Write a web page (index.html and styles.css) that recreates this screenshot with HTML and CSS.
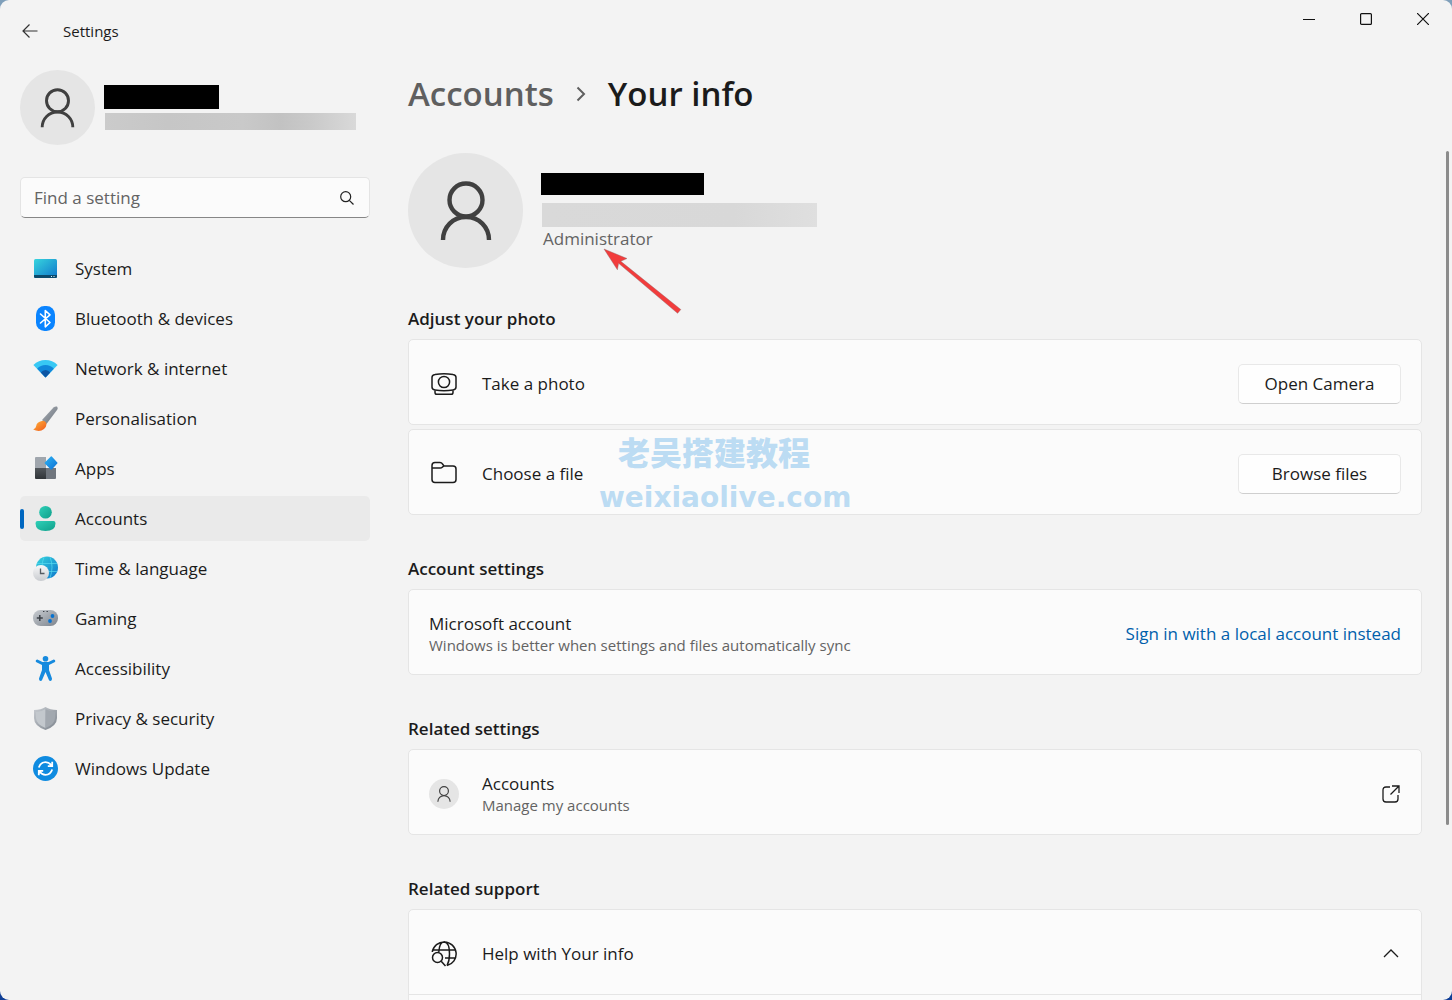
FILE: index.html
```html
<!DOCTYPE html>
<html lang="en-GB">
<head>
<meta charset="utf-8">
<meta name="viewport" content="width=device-width, initial-scale=1">
<title>Settings</title>
<link rel="stylesheet" href="styles.css">
</head>
<body>
<svg class="defs" aria-hidden="true">
  <defs>
    <symbol id="person" viewBox="0 0 52 60">
      <circle cx="26" cy="19" r="16.500" fill="none" stroke="currentColor" stroke-width="4.400"/>
      <path d="M3 59C3 46 13 36 26 36s23 10 23 23" fill="none" stroke="currentColor" stroke-width="4.400"/>
    </symbol>
    <linearGradient id="g-system" x1="0" y1="0" x2="1" y2="1"><stop offset="0" stop-color="#37d5de"/><stop offset="1" stop-color="#0f76cb"/></linearGradient>
    <linearGradient id="g-handle" x1="0" y1="0" x2="1" y2="1"><stop offset="0" stop-color="#aab0b7"/><stop offset="1" stop-color="#6b727b"/></linearGradient>
    <linearGradient id="g-brush" x1="0" y1="0" x2="1" y2="1"><stop offset="0" stop-color="#ffb43a"/><stop offset="1" stop-color="#f0591c"/></linearGradient>
    <linearGradient id="g-grey" x1="0" y1="0" x2="1" y2="1"><stop offset="0" stop-color="#c8ccd1"/><stop offset="1" stop-color="#7d848d"/></linearGradient>
    <linearGradient id="g-dark" x1="0" y1="0" x2="0" y2="1"><stop offset="0" stop-color="#51565b"/><stop offset="1" stop-color="#303438"/></linearGradient>
    <linearGradient id="g-blue" x1="0" y1="0" x2="1" y2="1"><stop offset="0" stop-color="#2fb5f4"/><stop offset="1" stop-color="#0b6fd4"/></linearGradient>
    <linearGradient id="g-teal" x1="0" y1="0" x2="1" y2="1"><stop offset="0" stop-color="#2fd0b8"/><stop offset="1" stop-color="#0f9f8a"/></linearGradient>
    <linearGradient id="g-clock" x1="0" y1="0" x2="0" y2="1"><stop offset="0" stop-color="#f8f8f9"/><stop offset="1" stop-color="#c9ccd0"/></linearGradient>
  </defs>
</svg>

<div class="window">
  <header class="titlebar">
    <button class="back" type="button" aria-label="Back">
      <svg width="16" height="16" viewBox="0 0 16 16"><path d="M15.500 8H1M7.500 1.500L1 8l6.500 6.500"/></svg>
    </button>
    <span class="app-name">Settings</span>
    <div class="window-controls">
      <button type="button" aria-label="Minimise"><svg width="12" height="12" viewBox="0 0 12 12"><path d="M0 6.500h12"/></svg></button>
      <button type="button" aria-label="Maximise"><svg width="12" height="12" viewBox="0 0 12 12"><rect x=".6" y=".6" width="10.800" height="10.800" rx="1"/></svg></button>
      <button type="button" aria-label="Close"><svg width="12" height="12" viewBox="0 0 12 12"><path d="M0 0l12 12M12 0L0 12"/></svg></button>
    </div>
  </header>

  <div class="layout">
    <aside class="sidebar">
      <div class="account">
        <span class="avatar avatar-medium"><svg viewBox="0 0 52 60"><use href="#person"/></svg></span>
        <div class="account-text">
          <span class="redacted redacted-name"></span>
          <span class="redacted redacted-mail"></span>
        </div>
      </div>

      <label class="search">
        <input type="search" placeholder="Find a setting" aria-label="Find a setting">
        <svg width="14" height="14" viewBox="0 0 14 14"><circle cx="5.700" cy="5.700" r="5"/><path d="M9.300 9.300L13.500 13.500"/></svg>
      </label>

      <nav class="nav" aria-label="Settings categories">
        <a href="#system"><svg viewBox="0 0 25 25"><rect x="1" y="3" width="23" height="19" rx="1.500" fill="url(#g-system)"/><path d="M1 19h23v1.500a1.500 1.500 0 0 1-1.500 1.500h-20A1.500 1.500 0 0 1 1 20.500z" fill="#0b4a6c"/><path d="M18 20.500h1M20.500 20.500h1" stroke="#d9f2fa"/></svg>System</a>
        <a href="#bluetooth"><svg viewBox="0 0 25 25"><rect x="3" y="0" width="19" height="25" rx="8.500" fill="#0a84ff"/><path d="M7.500 8l9.500 8.500-4.700 4.300V4.500L17 8.800 7.500 17" fill="none" stroke="#fff" stroke-width="1.600" stroke-linejoin="round" stroke-linecap="round"/></svg>Bluetooth &amp; devices</a>
        <a href="#network"><svg viewBox="0 0 25 25"><path d="M.4 9Q5.500 4 12.500 4t12.100 5L12.500 21.500z" fill="#38c8f4"/><path d="M4.200 12.700Q7.500 9 12.500 9t8.300 3.700l-8.300 8.800z" fill="#1187da"/><path d="M7.800 16.500q2-2.500 4.700-2.500t4.700 2.500l-4.700 5z" fill="#0c55a3"/></svg>Network &amp; internet</a>
        <a href="#personalisation"><svg viewBox="0 0 25 25"><path d="M9 14L20.500 1.400Q22.500 0 24 .6 25.200 2 24 4L13.500 18z" fill="url(#g-handle)"/><path d="M8 15.200q3.300-1.500 5 1.200 1.500 3.700-2 6.600Q6.500 26.500.2 23.500q2.600-.8 3-3.500.5-3.800 4.800-4.800z" fill="url(#g-brush)"/></svg>Personalisation</a>
        <a href="#apps"><svg viewBox="0 0 25 25"><path d="M3 1h10v11H2V2a1 1 0 0 1 1-1z" fill="#a0a6ad"/><path d="M2 12h11v11H3a1 1 0 0 1-1-1z" fill="url(#g-dark)"/><path d="M13 12h10v10a1 1 0 0 1-1 1h-9z" fill="#6f757d"/><path d="M17.800.5q.5-.4 1 0l5.500 6q.5.500 0 1l-5.500 6q-.5.400-1 0l-6-6q-.4-.5 0-1z" fill="url(#g-blue)"/></svg>Apps</a>
        <a href="#accounts" class="current" aria-current="page"><svg viewBox="0 0 25 25"><circle cx="12.500" cy="6.300" r="6.300" fill="url(#g-teal)"/><path d="M4.500 15h16q2 0 2 2.200 0 7.800-10 7.800t-10-7.800q0-2.200 2-2.200z" fill="url(#g-teal)"/></svg>Accounts</a>
        <a href="#time"><svg viewBox="0 0 25 25"><circle cx="14" cy="11.500" r="11" fill="url(#g-system)"/><path d="M4 7.500h20M4 15.500h20M11 1q-4 10 0 21M17 1q4 10 0 21" fill="none" stroke="#57daf0" stroke-width="1" opacity=".7"/><circle cx="8" cy="17" r="8" fill="url(#g-clock)"/><path d="M7.500 12.500v5h4" fill="none" stroke="#555b62" stroke-width="1.300"/></svg>Time &amp; language</a>
        <a href="#gaming"><svg viewBox="0 0 25 25"><rect x="0" y="4" width="25" height="16" rx="7.500" fill="url(#g-grey)"/><path d="M6.800 9v6M3.800 12h6" stroke="#3c4148" stroke-width="1.500"/><circle cx="19.500" cy="10" r="1.900" fill="#0873d0"/><circle cx="17" cy="15" r="1.900" fill="#0873d0"/><path d="M10 5.500h1.400M13.500 5.500h1.400" stroke="#3c4148"/></svg>Gaming</a>
        <a href="#accessibility"><svg viewBox="0 0 25 25"><circle cx="12.500" cy="2.800" r="2.800" fill="#168ade"/><path d="M4.300 3.500L9.500 6h6l5.200-2.500q1.600 0 1.600 1.600 0 .7-.8 1.200L16 9v5l3 8.500q.2 2-1.500 2.500-1.200 0-1.700-1.300L12.500 16 9.200 23.700Q8.700 25 7.500 25 5.800 24.500 6 22.500L9 14V9L3.500 6.300q-.8-.5-.8-1.200 0-1.600 1.600-1.600z" fill="#168ade"/></svg>Accessibility</a>
        <a href="#privacy"><svg viewBox="0 0 25 25"><path d="M12.500 1Q17 4 24 4v8q0 8-11.500 12Q1 20 1 12V4q7 0 11.500-3z" fill="url(#g-grey)"/><path d="M12.500 3Q8 6 3 6v6q0 6 9.500 10z" fill="#c3c8cd"/><path d="M12.500 3Q17 6 22 6v6q0 6-9.500 10z" fill="#a2a8af"/></svg>Privacy &amp; security</a>
        <a href="#update"><svg viewBox="0 0 25 25"><circle cx="12.500" cy="12.500" r="12.500" fill="#0f8be0"/><path d="M5.800 11.500Q7.500 6.200 12.500 6.200q3.700 0 6 3.300M19.200 5.800v4.300h-4.400M19.200 13.500q-1.700 5.300-6.700 5.300-3.700 0-6-3.300M5.800 19.200v-4.300h4.400" fill="none" stroke="#fff" stroke-width="1.800"/></svg>Windows Update</a>
      </nav>
    </aside>

    <main class="main">
      <h1 class="breadcrumb">
        <a href="#accounts">Accounts</a>
        <svg width="10" height="16" viewBox="0 0 10 16"><path d="M1.500 1.500L8 8l-6.500 6.500"/></svg>
        <span>Your info</span>
      </h1>

      <section class="profile">
        <span class="avatar avatar-large"><svg viewBox="0 0 52 60"><use href="#person"/></svg></span>
        <div class="profile-text">
          <span class="redacted redacted-name"></span>
          <span class="redacted redacted-mail"></span>
          <span class="role">Administrator</span>
          <svg class="pointer" width="80" height="66" viewBox="0 0 80 66"><path d="M2 1l23 9.500-6.200 2.800 60 48.200-3.200 3.800-59-50-1.200 6.500z"/></svg>
        </div>
      </section>

      <section class="group">
        <h2>Adjust your photo</h2>
        <div class="card">
          <svg class="card-icon" viewBox="0 0 26 26"><path d="M4 3.500q9-1.500 18 0 3 .4 3 3v9.500q0 2.600-3 3-9 1.500-18 0-3-.4-3-3V6.500q0-2.600 3-3z"/><circle cx="13" cy="11" r="5.600"/><path d="M4 19.500v2q0 1.800 1.800 1.800h14.400q1.800 0 1.800-1.800v-2"/></svg>
          <span class="card-title">Take a photo</span>
          <button class="button" type="button">Open Camera</button>
        </div>
        <div class="card">
          <svg class="card-icon" viewBox="0 0 26 26"><path d="M1 18.500V4.500q0-3 3-3h5q1.500 0 2.300 1.200L13 5h9q3 0 3 3v10.500q0 3-3 3H4q-3 0-3-3zM1 7h8q1.500 0 2.300-.8L13 5"/></svg>
          <span class="card-title">Choose a file</span>
          <button class="button" type="button">Browse files</button>
        </div>
        <div class="watermark"><span class="watermark-name" lang="zh">老吴搭建教程</span><span class="watermark-site">weixiaolive.com</span></div>
      </section>

      <section class="group">
        <h2>Account settings</h2>
        <div class="card">
          <div class="card-text"><span class="card-title">Microsoft account</span><span class="card-note">Windows is better when settings and files automatically sync</span></div>
          <a class="link" href="#local">Sign in with a local account instead</a>
        </div>
      </section>

      <section class="group">
        <h2>Related settings</h2>
        <a class="card" href="#manage">
          <span class="avatar avatar-small"><svg viewBox="0 0 52 60"><use href="#person"/></svg></span>
          <div class="card-text"><span class="card-title">Accounts</span><span class="card-note">Manage my accounts</span></div>
          <svg class="card-end" width="18" height="18" viewBox="0 0 18 18"><path d="M8 2H4Q1 2 1 5v9q0 3 3 3h9q3 0 3-3v-4M10 1h7v7M17 1L8.500 9.500"/></svg>
        </a>
      </section>

      <section class="group">
        <h2>Related support</h2>
        <button class="card card-open" type="button" aria-expanded="true">
          <svg class="card-icon" viewBox="0 0 26 26"><path d="M1.300 11A12 12 0 1 1 16 24.600M2 9h22M14 17h10M7.800 11Q8.500 1 13 1q5.500 0 5.500 12 0 7-2.500 11.500"/><circle cx="6.500" cy="16.500" r="5"/><path d="M10.200 20.200L14.500 25"/></svg>
          <span class="card-title">Help with Your info</span>
          <svg class="card-end" width="18" height="18" viewBox="0 0 18 18"><path d="M2 12l7-7 7 7"/></svg>
        </button>
        <div class="card-body"></div>
      </section>
    </main>
  </div>
  <div class="scrollbar"></div>
</div>
</body>
</html>
```
FILE: styles.css
```css
* { box-sizing: border-box; }

body {
  margin: 0;
  background: linear-gradient(#7f9fba 50%, #103f96 50%);
  color: #1b1b1b;
  font-family: "Open Sans", "Noto Sans", sans-serif;
  font-size: 17px;
  line-height: 24px;
}

a { color: inherit; text-decoration: none; }
button { font: inherit; color: inherit; }
svg { flex: none; fill: none; stroke: none; }
.defs { position: absolute; width: 0; height: 0; }

.window {
  position: relative;
  height: 100vh;
  overflow: hidden;
  border-radius: 9px;
  background: #f3f3f3;
}

/* Title bar */
.titlebar {
  display: flex;
  align-items: center;
  height: 62px;
  padding: 0 1px 0 14px;
}
.back {
  display: grid;
  place-items: center;
  width: 32px;
  height: 32px;
  padding: 0;
  border: 0;
  background: none;
}
.back svg { stroke: #333; stroke-width: 1.2; }
.app-name { margin-left: 17px; font-size: 15px; }
.window-controls {
  display: flex;
  align-self: flex-start;
  margin-left: auto;
}
.window-controls button {
  display: grid;
  place-items: center;
  width: 57px;
  height: 38px;
  padding: 0;
  border: 0;
  background: none;
}
.window-controls svg { stroke: #111; stroke-width: 1.2; }

.layout {
  display: grid;
  grid-template-columns: 350px minmax(0, 1fr);
  gap: 38px;
  padding: 8px 30px 0 20px;
}

/* Shared */
.avatar {
  display: grid;
  flex: none;
  place-items: center;
  border-radius: 50%;
  background: #e5e5e5;
  color: #404040;
}
.avatar-large { width: 115px; height: 115px; }
.avatar-large svg { width: 52px; height: 60px; }
.avatar-medium { width: 75px; height: 75px; }
.avatar-medium svg { width: 35px; height: 40px; }
.avatar-small { width: 30px; height: 30px; }
.avatar-small svg { width: 14px; height: 16px; }
.redacted { display: block; }
.redacted-name { background: #000; }

/* Sidebar */
.account { display: flex; gap: 9px; }
.account-text { padding-top: 15px; }
.account .redacted-name { width: 115px; height: 24px; }
.account .redacted-mail {
  width: 251px;
  height: 17px;
  margin: 4px 0 0 1px;
  background: linear-gradient(90deg, #cbcbcb, #c6c6c6 25%, #c9c9c9 55%, #c2c2c2 70%, #cacaca 83%, #d9d9d9);
}
.search {
  display: flex;
  align-items: center;
  height: 41px;
  margin: 32px 0 28px;
  padding: 0 15px 0 13px;
  border: 1px solid #e4e4e4;
  border-bottom-color: #868686;
  border-radius: 5px;
  background: #fbfbfb;
}
.search input {
  flex: 1;
  min-width: 0;
  padding: 0;
  border: 0;
  outline: 0;
  background: none;
  font: inherit;
}
.search input::placeholder { color: #636363; opacity: 1; }
.search svg { stroke: #222; stroke-width: 1.2; }

.nav { display: grid; gap: 5px; }
.nav a {
  position: relative;
  display: flex;
  align-items: center;
  gap: 17px;
  height: 45px;
  padding-left: 13px;
  border-radius: 5px;
}
.nav svg { width: 25px; height: 25px; }
.nav .current { background: #eaeaea; }
.nav .current::before {
  content: "";
  position: absolute;
  left: 0;
  width: 4px;
  height: 20px;
  border-radius: 2px;
  background: #0067c0;
}

/* Main column */
.breadcrumb {
  display: flex;
  align-items: center;
  gap: 22px;
  margin: 0 0 35px;
  font-size: 33px;
  font-weight: 600;
  line-height: 48px;
}
.breadcrumb a { color: #5f5f5f; }
.breadcrumb svg { stroke: #5f5f5f; stroke-width: 2; }

.profile {
  display: flex;
  gap: 18px;
  margin-bottom: 39px;
}
.profile-text {
  position: relative;
  padding-top: 20px;
}
.profile .redacted-name { width: 163px; height: 22px; }
.profile .redacted-mail {
  width: 275px;
  height: 24px;
  margin: 8px 0 0 1px;
  background: linear-gradient(90deg, #d9d9d9, #d8d8d8 70%, #dfdfdf);
}
.role { display: block; margin-left: 2px; color: #636363; }
.pointer {
  position: absolute;
  top: 95px;
  left: 61px;
  fill: #f23c3c;
  stroke: #8a6060;
  stroke-width: .4;
}

.group {
  position: relative;
  display: grid;
  gap: 4px;
  margin-bottom: 42px;
}
.group h2 {
  margin: 0 0 4px;
  font-size: 17px;
  font-weight: 600;
  line-height: 24px;
}
.card {
  display: flex;
  align-items: center;
  width: 100%;
  height: 86px;
  padding: 4px 20px 0;
  border: 1px solid #e5e5e5;
  border-radius: 5px;
  background: #fbfbfb;
  text-align: left;
}
.card > :last-child { margin-left: auto; }
.card-icon {
  width: 26px;
  height: 26px;
  margin: 0 25px 0 2px;
  stroke: #1b1b1b;
  stroke-width: 1.5;
}
.card .avatar { margin-right: 23px; }
.card-end { margin-right: 1px; stroke: #1b1b1b; stroke-width: 1.3; }
.card-title, .card-note { display: block; }
.card-text .card-title { line-height: 22px; }
.card-note { color: #636363; font-size: 15px; line-height: 20px; }
.button {
  width: 163px;
  height: 40px;
  padding: 0;
  border: 1px solid #e8e8e8;
  border-bottom-color: #cfcfcf;
  border-radius: 5px;
  background: #fefefe;
}
.link { color: #0060ab; }
.card-open { border-radius: 5px 5px 0 0; }
.card-body {
  height: 80px;
  margin-top: -5px;
  border: 1px solid #e5e5e5;
  background: #fbfbfb;
}

.watermark {
  position: absolute;
  top: 125px;
  left: 191px;
  display: grid;
  gap: 6px;
  color: #bcdcf3;
  font-weight: 700;
  line-height: 44px;
  pointer-events: none;
}
.watermark-name {
  padding-left: 19px;
  font-family: "Noto Sans CJK SC", sans-serif;
  font-size: 32px;
  font-weight: 900;
  line-height: 38px;
}
.watermark-site { font-family: "DejaVu Sans", sans-serif; font-size: 28px; }

.scrollbar {
  position: absolute;
  top: 151px;
  right: 3px;
  width: 3px;
  height: 67.4%;
  border-radius: 2px;
  background: #8b8b8b;
}
```
